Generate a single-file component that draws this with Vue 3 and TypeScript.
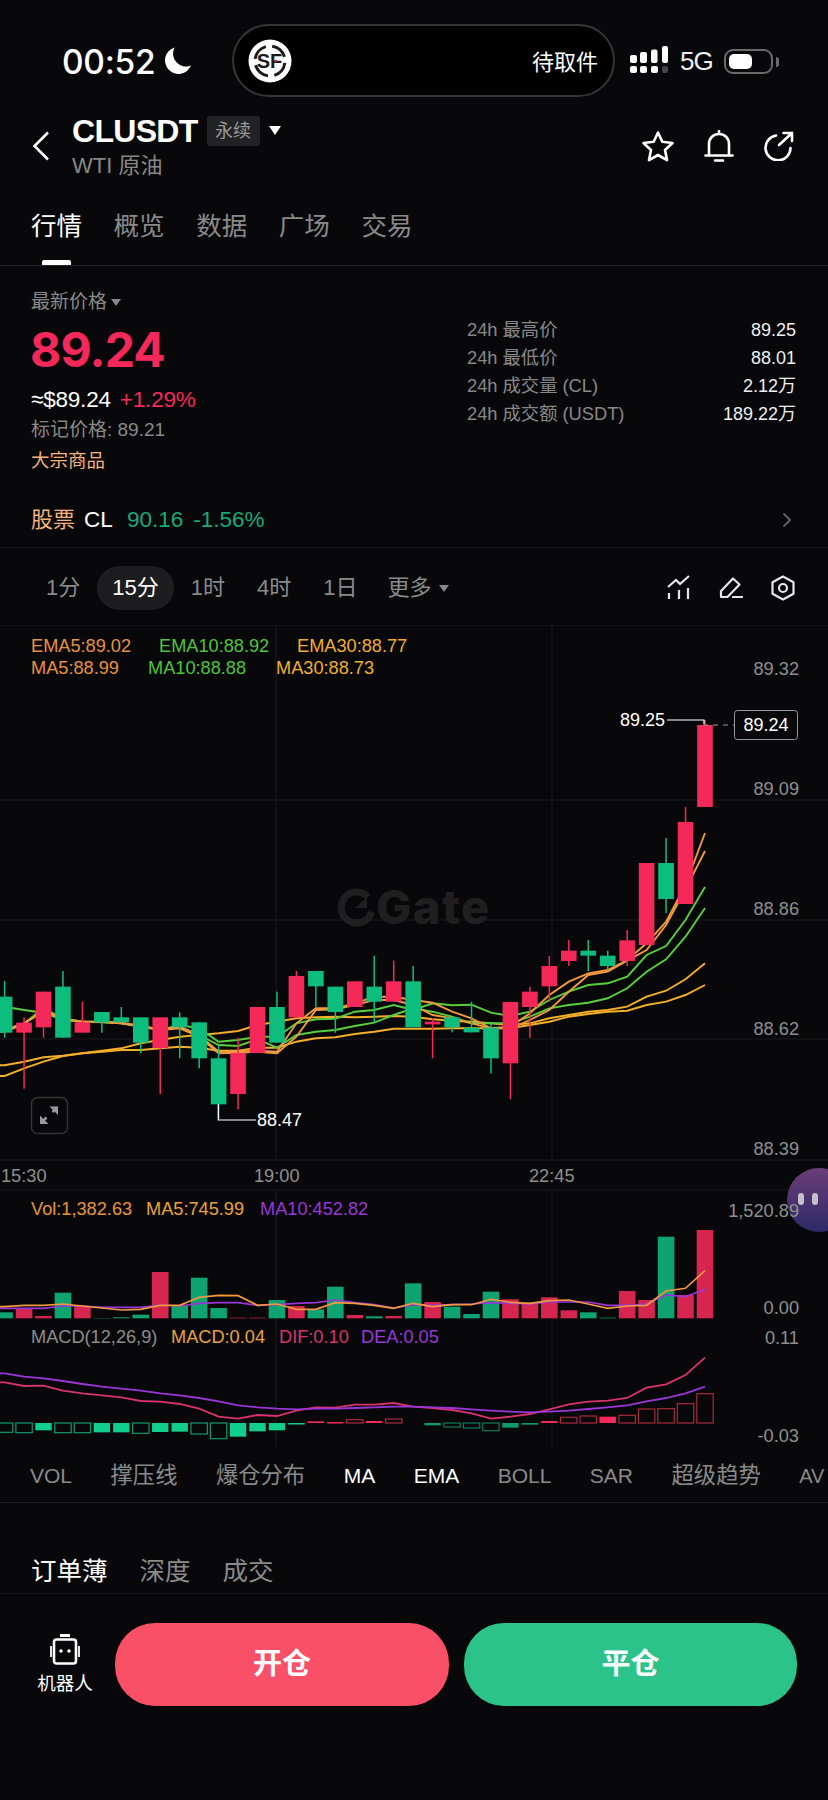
<script setup lang="ts">
type Candle = [number, number, number, number, 'r' | 'g']
const xOf = (i: number) => 4.6 + i * 19.455
const mainY = (z: number) => 920 + z / 3
const subY = (z: number) => 1180 + z / 3

// body top, body bottom, wick top, wick bottom
const rawCandles: Candle[] = [
  [230,338,183,353,'g'],[308,338,292,506,'r'],[215,322,215,353,'r'],[200,353,153,353,'g'],
  [307,338,245,338,'r'],[276,307,276,338,'g'],[292,307,261,307,'g'],[292,368,292,399,'g'],
  [292,384,292,522,'r'],[292,322,277,415,'g'],[307,415,307,445,'g'],[415,553,375,600,'g'],
  [399,522,353,568,'r'],[261,399,261,399,'r'],[261,368,215,368,'g'],[168,292,153,292,'r'],
  [153,199,153,261,'g'],[200,276,200,338,'g'],[184,261,184,261,'r'],[200,245,107,307,'g'],
  [184,245,122,245,'r'],[184,322,138,322,'g'],[305,313,295,415,'r'],[292,322,292,337,'g'],
  [323,337,245,337,'g'],[323,415,310,460,'g'],[246,430,246,538,'r'],[215,261,200,353,'r'],
  [138,199,108,245,'r'],[92,123,60,138,'r'],[92,107,60,153,'g'],[107,138,92,150,'g'],
  [61,123,30,138,'r'],[-171,75,-171,75,'r'],[-171,-63,-246,-21,'g'],[-294,-48,-339,-48,'r'],
  [-585,-339,-600,-339,'r'],
]
const candles = rawCandles.map((c, i) => ({
  x: xOf(i), top: mainY(c[0]), h: (c[1] - c[0]) / 3, wt: mainY(c[2]), wb: mainY(c[3]),
  color: c[4] === 'r' ? '#f5285a' : '#0dbd7d',
}))

const pts = (ys: number[], f: (z: number) => number) =>
  `0,${f(ys[0]).toFixed(1)} ` + ys.map((y, i) => `${xOf(i).toFixed(1)},${f(y).toFixed(1)}`).join(' ')

const mainLines = [
  { c: '#f5ae2a', y: [436,425,412,407,400,392,385,370,360,350,345,340,333,315,305,295,292,290,292,290,288,290,298,302,305,310,315,310,295,285,275,270,260,230,212,178,130] },
  { c: '#f5ae2a', y: [468,445,425,408,400,395,390,390,385,380,383,392,392,383,383,365,355,352,342,335,326,326,326,325,325,325,325,315,305,290,282,275,272,255,245,225,195] },
  { c: '#58cf3c', y: [260,270,278,300,305,305,310,320,330,315,325,365,360,350,350,310,298,296,275,270,255,270,250,256,254,278,288,275,240,215,195,190,170,105,78,0,-99] },
  { c: '#58cf3c', y: [330,310,265,295,305,307,310,318,330,320,345,375,378,358,383,345,335,330,318,308,285,265,275,290,310,310,310,290,265,255,248,235,205,155,118,50,-36] },
  { c: '#f0993f', y: [330,310,275,296,305,305,308,318,328,320,345,395,395,392,395,310,265,265,250,230,230,240,248,275,295,325,320,280,225,185,160,150,120,70,5,-105,-261] },
  { c: '#f0993f', y: [335,312,270,298,305,306,310,318,330,325,350,400,398,395,400,350,270,268,255,240,240,255,285,295,310,325,325,300,270,215,165,155,122,90,15,-92,-207] },
].map(l => ({ c: l.c, d: pts(l.y, mainY) }))

const volTops = [397,385,408,338,378,414,412,404,276,376,293,384,413,413,360,378,388,320,405,409,408,310,366,380,402,335,358,368,352,391,397,413,333,360,170,345,150]
const volRed = [1,2,4,8,12,13,15,18,20,22,26,27,28,29,32,33,35,36]
const volBars = volTops.map((t, i) => ({
  x: xOf(i) - 8.3, y: subY(t), h: (415 - t) / 3,
  c: volRed.includes(i) ? '#d6264f' : '#0ea370',
}))

const volLines = [
  { c: '#9a36d8', y: [385,385,385,378,378,382,382,382,375,378,370,368,368,376,374,370,368,360,368,374,384,374,376,374,372,368,370,372,366,366,366,376,376,372,345,350,328] },
  { c: '#f0993f', y: [380,376,376,372,378,384,390,388,376,376,352,346,347,376,372,388,388,368,370,376,385,370,380,374,374,358,367,370,362,360,372,385,378,376,333,325,272] },
].map(l => ({ c: l.c, d: pts(l.y, subY) }))

const macdLines = [
  { c: '#d8336f', y: [607,618,617,632,640,646,652,663,665,672,686,710,716,705,708,692,682,683,674,674,669,680,684,690,700,716,710,702,688,673,665,662,654,623,613,585,533] },
  { c: '#9a36d8', y: [580,590,595,603,612,620,626,632,640,646,654,664,676,682,686,688,686,686,684,682,680,680,682,684,688,692,695,697,695,692,687,682,676,664,654,640,620] },
].map(l => ({ c: l.c, d: pts(l.y, subY) }))

// end value, hollow?, red?
const macdRaw: [number, boolean, boolean][] = [
  [757,true,false],[758,true,false],[751,false,false],[758,true,false],[758,true,false],[757,false,false],
  [757,false,false],[760,true,false],[756,false,false],[755,false,false],[762,true,false],[776,true,false],
  [770,false,false],[754,false,false],[751,false,false],[733,false,false],[724,false,true],[726,false,true],
  [719,true,true],[723,false,true],[717,true,true],[729,false,true],[736,false,false],[741,true,false],
  [744,true,false],[752,true,false],[743,false,false],[734,false,false],[723,false,true],[712,true,true],
  [708,true,true],[710,false,true],[706,true,true],[687,true,true],[686,true,true],[671,true,true],[641,true,true],
]
const macdBars = macdRaw.map((b, i) => {
  const top = Math.min(b[0], 729), bot = Math.max(b[0], 729)
  const h = (bot - top) / 3
  const dim = i >= 22 && i <= 27
  const color = b[2] ? (b[1] ? '#a82a40' : '#f5285a') : (b[1] ? (dim ? '#0f7a58' : '#119a6e') : (dim ? '#0f9a6c' : '#10cf8c'))
  return { x: xOf(i) - 8.2, y: subY(top), h, hollow: b[1], color }
}).filter(b => b.h > 0)

const grids = [625, 800, 920, 1039, 1160, 1190]
const axis = [
  { t: '89.32', y: 669 }, { t: '89.09', y: 789 }, { t: '88.86', y: 909 }, { t: '88.62', y: 1029 }, { t: '88.39', y: 1149 },
  { t: '1,520.89', y: 1211 }, { t: '0.00', y: 1308 }, { t: '0.11', y: 1338 }, { t: '-0.03', y: 1436 },
]
const labels = [
  { t: 'EMA5:89.02', x: 31, y: 646, c: '#e8913f' }, { t: 'EMA10:88.92', x: 159, y: 646, c: '#4fc43a' }, { t: 'EMA30:88.77', x: 297, y: 646, c: '#f0ae2e' },
  { t: 'MA5:88.99', x: 31, y: 668, c: '#e8913f' }, { t: 'MA10:88.88', x: 148, y: 668, c: '#4fc43a' }, { t: 'MA30:88.73', x: 276, y: 668, c: '#f0ae2e' },
  { t: 'Vol:1,382.63', x: 31, y: 1209, c: '#e8943a' }, { t: 'MA5:745.99', x: 146, y: 1209, c: '#e8a33a' }, { t: 'MA10:452.82', x: 260, y: 1209, c: '#9a36d8' },
  { t: 'MACD(12,26,9)', x: 31, y: 1337, c: '#8c8c8c' }, { t: 'MACD:0.04', x: 171, y: 1337, c: '#e8a33a' }, { t: 'DIF:0.10', x: 279, y: 1337, c: '#d8336f' }, { t: 'DEA:0.05', x: 361, y: 1337, c: '#9a36d8' },
]
const times = [{ t: '15:30', x: 1 }, { t: '19:00', x: 254 }, { t: '22:45', x: 529 }]

const navTabs = ['行情', '概览', '数据', '广场', '交易']
const stats = [
  { k: '24h 最高价', v: '89.25' }, { k: '24h 最低价', v: '88.01' },
  { k: '24h 成交量 (CL)', v: '2.12万' }, { k: '24h 成交额 (USDT)', v: '189.22万' },
]
const frames = ['1分', '15分', '1时', '4时', '1日']
const indicators = [
  { t: 'VOL', on: false, latin: true }, { t: '撑压线', on: false, latin: false }, { t: '爆仓分布', on: false, latin: false },
  { t: 'MA', on: true, latin: true }, { t: 'EMA', on: true, latin: true }, { t: 'BOLL', on: false, latin: true },
  { t: 'SAR', on: false, latin: true }, { t: '超级趋势', on: false, latin: false }, { t: 'AV', on: false, latin: true },
]
</script>

<template>
  <div class="page">
    <div class="status">
      <span class="time">00:52</span>
      <svg class="moon" width="28" height="30" viewBox="0 0 28 30"><path d="M10.5 1.5A13.5 13.5 0 1 0 27 19.5 13 13 0 0 1 10.5 1.5Z" fill="#fff" /></svg>
      <div class="island">
        <svg class="sf" width="44" height="44" viewBox="0 0 44 44">
          <circle cx="22" cy="22" r="21.5" fill="#fff" />
          <circle cx="22" cy="22" r="15" fill="none" stroke="#1a1a1a" stroke-width="3" stroke-dasharray="17 6.5" stroke-dashoffset="-2" />
          <text x="21.5" y="29" text-anchor="middle" class="sf-t">SF</text>
          <circle cx="28" cy="22" r="1.3" fill="#e0154a" />
        </svg>
        <span class="pickup">待取件</span>
      </div>
      <svg class="signal" width="40" height="28" viewBox="0 0 40 28">
        <rect x="1" y="9" width="7" height="8" rx="2" fill="#fff" /><rect x="1" y="20" width="7" height="7" rx="2" fill="#fff" />
        <rect x="11" y="6" width="7" height="11" rx="2" fill="#fff" /><rect x="11" y="20" width="7" height="7" rx="2" fill="#fff" />
        <rect x="22" y="3.500" width="6.500" height="13.500" rx="2" fill="#fff" /><rect x="22" y="20" width="7" height="7" rx="2" fill="#fff" />
        <rect x="33" y="0" width="6" height="17" rx="2" fill="#fff" /><rect x="33" y="20" width="6" height="7" rx="2" fill="#444" />
      </svg>
      <span class="net">5G</span>
      <div class="battery"><i class="level"></i></div>
      <i class="nub"></i>
    </div>

    <header class="head">
      <svg class="back" width="18" height="30" viewBox="0 0 18 30"><path d="M16 1.500 2.500 15 16 28.500" fill="none" stroke="#fff" stroke-width="2.600" /></svg>
      <div class="title">
        <div class="title-row">
          <span class="sym">CLUSDT</span>
          <span class="perp">永续</span>
          <i class="tri big"></i>
        </div>
        <div class="sub">WTI 原油</div>
      </div>
      <div class="head-icons">
        <svg width="34" height="32" viewBox="0 0 34 32"><path d="M17 2.500l4.300 9.300 10.200 1.200-7.500 7 2 10.100L17 25l-9 5.100 2-10.100-7.500-7 10.200-1.200Z" fill="none" stroke="#fff" stroke-width="2.600" stroke-linejoin="round" /></svg>
        <svg width="30" height="32" viewBox="0 0 30 32"><path d="M5 25V14C5 8 9.500 4 15 4s10 4 10 10v11M1.500 25.500h27M15 1v3M11 30.500h8" fill="none" stroke="#fff" stroke-width="2.600" stroke-linecap="round" /></svg>
        <svg width="32" height="30" viewBox="0 0 32 30"><path d="M13 4.500A12.500 12.500 0 1 0 27.500 17" fill="none" stroke="#fff" stroke-width="2.600" stroke-linecap="round" /><path d="M16 14 29 2M20.500 2H29v8" fill="none" stroke="#fff" stroke-width="2.600" stroke-linecap="round" /></svg>
      </div>
    </header>

    <nav class="tabs">
      <span v-for="(t, i) in navTabs" :key="t" class="tab" :class="{ on: i === 0 }">{{ t }}</span>
    </nav>

    <section class="summary">
      <div class="left">
        <div class="latest">最新价格 <i class="tri small"></i></div>
        <div class="price">89.24</div>
        <div class="usd">≈$89.24 <span class="up">+1.29%</span></div>
        <div class="mark">标记价格: 89.21</div>
        <div class="cat">大宗商品</div>
      </div>
      <div class="right">
        <div v-for="s in stats" :key="s.k" class="stat"><span class="k">{{ s.k }}</span><span class="v">{{ s.v }}</span></div>
      </div>
    </section>

    <div class="stock">
      <span class="cat2">股票</span><span class="cl">CL</span><span class="dn">90.16</span><span class="dn">-1.56%</span>
      <svg class="more" width="10" height="16" viewBox="0 0 10 16"><path d="M1.500 1.500 8 8l-6.500 6.500" fill="none" stroke="#777" stroke-width="1.500" /></svg>
    </div>

    <div class="frames">
      <span v-for="f in frames" :key="f" class="frame" :class="{ on: f === '15分' }">{{ f }}</span>
      <span class="frame mored">更多<i class="tri tiny"></i></span>
      <div class="frame-icons">
        <svg width="24" height="26" viewBox="0 0 24 26"><path d="M1 12 9 5l4 4 9-8M2 18v6M12 15v9M21 13v11" fill="none" stroke="#e6e6e6" stroke-width="2.200" /></svg>
        <svg width="24" height="26" viewBox="0 0 24 26"><path d="M2 22v-6L14 3.500l6.500 6L8.500 22ZM13 22h11" fill="none" stroke="#e6e6e6" stroke-width="2.200" stroke-linejoin="round" /></svg>
        <svg width="24" height="26" viewBox="0 0 24 26"><path d="M12 1.500 22.500 7.200v11.600L12 24.500 1.500 18.800V7.200Z" fill="none" stroke="#e6e6e6" stroke-width="2.200" stroke-linejoin="round" /><circle cx="12" cy="13" r="4" fill="none" stroke="#e6e6e6" stroke-width="2.200" /></svg>
      </div>
    </div>

    <svg class="chart" width="828" height="825" viewBox="0 625 828 825">
      <line v-for="g in grids" :key="g" x1="0" x2="828" :y1="g" :y2="g" class="grid" />
      <line x1="276" x2="276" y1="625" y2="1160" class="grid" /><line x1="552" x2="552" y1="625" y2="1160" class="grid" />
      <line x1="276" x2="276" y1="1190" y2="1447" class="grid" /><line x1="552" x2="552" y1="1190" y2="1447" class="grid" />

      <g class="wm">
        <path d="M368 897a15.500 15.500 0 1 0 3.500 15" fill="none" stroke="#1f1f20" stroke-width="7" />
        <path d="M355 908h12v-11" fill="#1f1f20" />
        <text x="376" y="924" class="wm-t">Gate</text>
      </g>

      <polyline v-for="(l, i) in mainLines" :key="i" :points="l.d" fill="none" :stroke="l.c" stroke-width="1.900" />
      <g v-for="(c, i) in candles" :key="i">
        <rect :x="c.x - 0.75" :y="c.wt" width="1.500" :height="c.wb - c.wt" :fill="c.color" />
        <rect :x="c.x - 7.8" :y="c.top" width="15.600" :height="c.h" :fill="c.color" />
      </g>

      <path d="M667 720h37v4" fill="none" stroke="#fff" stroke-width="1.200" />
      <line x1="703" x2="734" y1="725" y2="725" stroke="#999" stroke-width="1.200" stroke-dasharray="5 5" />
      <text x="620" y="726" class="note">89.25</text>
      <rect x="734.500" y="710.500" width="63" height="29" rx="3" fill="#08080a" stroke="#999" />
      <text x="766" y="731" text-anchor="middle" class="note">89.24</text>
      <path d="M218.300 1104v16H256" fill="none" stroke="#fff" stroke-width="1.200" />
      <text x="257" y="1126" class="note">88.47</text>

      <rect x="31.500" y="1097.500" width="36" height="36" rx="6" fill="none" stroke="#333" stroke-width="1.500" />
      <path d="M46.500 1117.500l-4.500 4.500M52.500 1112l4.500-4.500" stroke="#999" stroke-width="2.500" />
      <path d="M40 1115.500v8.500h8.500ZM49.500 1106.500h8.500v8.500Z" fill="#999" />

      <defs>
        <linearGradient id="bub" x1="0" y1="0" x2="0" y2="1"><stop offset="0" stop-color="#6c3e78" /><stop offset="1" stop-color="#2c2968" /></linearGradient>
      </defs>
      <circle cx="819" cy="1200" r="32" fill="url(#bub)" />
      <rect x="798" y="1193" width="6" height="12" rx="3" fill="#c4c0cc" /><rect x="812" y="1193" width="6" height="12" rx="3" fill="#c4c0cc" />

      <text v-for="l in labels" :key="l.t + l.x" :x="l.x" :y="l.y + 6" class="lab" :fill="l.c">{{ l.t }}</text>
      <text v-for="a in axis" :key="a.t" x="799" :y="a.y + 6" class="lab" text-anchor="end" fill="#8f8f8f">{{ a.t }}</text>
      <text v-for="t in times" :key="t.t" :x="t.x" y="1182" class="lab" fill="#8f8f8f">{{ t.t }}</text>

      <rect v-for="(b, i) in volBars" :key="i" :x="b.x" :y="b.y" width="16.600" :height="b.h" :fill="b.c" />
      <polyline v-for="(l, i) in volLines" :key="i" :points="l.d" fill="none" :stroke="l.c" stroke-width="1.700" />

      <template v-for="(b, i) in macdBars" :key="i">
        <rect v-if="b.hollow" :x="b.x" :y="b.y" width="16.400" :height="b.h" fill="none" :stroke="b.color" stroke-width="1.200" />
        <rect v-else :x="b.x" :y="b.y" width="16.400" :height="Math.max(b.h, 1.500)" :fill="b.color" />
      </template>
      <polyline v-for="(l, i) in macdLines" :key="i" :points="l.d" fill="none" :stroke="l.c" stroke-width="1.800" />
    </svg>

    <div class="inds">
      <span v-for="d in indicators" :key="d.t" class="ind" :class="{ on: d.on, latin: d.latin }">{{ d.t }}</span>
    </div>

    <div class="book">
      <span class="btab on">订单薄</span><span class="btab">深度</span><span class="btab">成交</span>
    </div>

    <footer class="foot">
      <div class="bot">
        <svg width="32" height="31" viewBox="0 0 32 31">
          <path d="M11 1.500h10" stroke="#fff" stroke-width="3" />
          <rect x="5" y="5.500" width="22" height="24" rx="2.500" fill="none" stroke="#fff" stroke-width="2.600" />
          <path d="M2 12v11M30 12v11" stroke="#fff" stroke-width="1.800" />
          <circle cx="12" cy="17" r="1.800" fill="#fff" /><circle cx="20" cy="17" r="1.800" fill="#fff" />
        </svg>
        <span>机器人</span>
      </div>
      <div class="btn open">开仓</div>
      <div class="btn close">平仓</div>
    </footer>
  </div>
</template>

<style>
html, body { margin: 0; background: #08080a; }
</style>

<style scoped>
.page { width: 828px; height: 1800px; overflow: hidden; position: relative; background: #08080a; color: #fff; font-family: "Liberation Sans", "Noto Sans CJK SC", sans-serif; }
i { display: block; }
.status { height: 100px; box-sizing: border-box; padding: 24px 0 3px 62px; display: flex; align-items: center; }
.time { margin-top: 3px; font-family: Inter, sans-serif; font-weight: 500; font-size: 33.500px; width: 102px; letter-spacing: -0.3px; line-height: 40px; }
.moon { margin-top: 0; }
.island { margin-left: 40px; width: 383px; height: 73px; box-sizing: border-box; border: 2.500px solid #353535; border-radius: 37px; background: #000; display: flex; align-items: center; justify-content: space-between; padding: 0 15px 0 14px; }
.sf-t { font-family: "Liberation Sans", sans-serif; font-weight: 700; font-size: 20px; fill: #1a1a1a; }
.pickup { font-size: 22px; margin-top: -1px; }
.signal { margin-left: 14px; margin-top: -1px; }
.net { margin-left: 11px; margin-top: 2px; font-size: 26px; width: 32px; letter-spacing: -1px; color: #eee; }
.battery { margin-left: 12px; margin-top: 2px; width: 49px; height: 25px; box-sizing: border-box; border: 2.500px solid #6a6a6a; border-radius: 9px; padding: 2.500px; }
.level { width: 23px; height: 15px; background: #fff; border-radius: 5px; }
.nub { width: 3px; height: 10px; margin-left: 3px; margin-top: 2px; background: #6a6a6a; border-radius: 0 3px 3px 0; }

.head { height: 90px; box-sizing: border-box; padding: 11px 33px 9px 32px; display: flex; align-items: center; }
.back { margin-right: 22px; }
.title { flex: 1; }
.title-row { display: flex; align-items: center; height: 30px; }
.sym { font-size: 32px; font-weight: 700; line-height: 30px; letter-spacing: -0.700px; }
.perp { margin-left: 9px; width: 53px; height: 30px; line-height: 30px; text-align: center; font-size: 18px; color: #999; background: #222224; border-radius: 3px; }
.tri { width: 0; height: 0; border-style: solid; border-color: transparent; }
.tri.big { margin-left: 9px; border-width: 9px 6px 0; border-top-color: #fff; }
.sub { margin-top: 9px; font-size: 22px; line-height: 22px; color: #888; }
.head-icons { display: flex; align-items: center; gap: 29px; }

.tabs { height: 76px; box-sizing: border-box; padding: 18px 0 0 31px; display: flex; gap: 31.600px; border-bottom: 1px solid #232325; }
.tab { position: relative; height: 57px; font-size: 25.500px; line-height: 36px; color: #8a8a8a; }
.tab.on { color: #fff; }
.tab.on::after { content: ""; position: absolute; left: 11px; top: 52px; width: 29px; height: 5px; background: #fff; border-radius: 2px 2px 0 0; }

.summary { height: 226px; box-sizing: border-box; padding: 0 32px 0 31px; display: flex; justify-content: space-between; }
.latest { margin-top: 26px; height: 20px; font-size: 19px; line-height: 20px; color: #888; display: flex; align-items: center; gap: 4px; }
.tri.small { border-width: 7px 5.500px 0; border-top-color: #888; }
.price { margin: 10px 0 0 -1px; height: 56px; font-family: Inter, sans-serif; font-weight: 700; font-size: 48px; line-height: 56px; color: #f6285a; letter-spacing: -0.800px; }
.usd { margin-top: 9px; height: 26px; font-size: 22.500px; line-height: 26px; letter-spacing: -0.200px; }
.up { color: #f6285a; margin-left: 3px; }
.mark { margin-top: 6px; height: 22px; font-size: 19px; line-height: 22px; color: #888; }
.cat { margin-top: 9px; height: 22px; font-size: 18.500px; line-height: 22px; color: #f5b27a; }
.right { width: 329px; padding-top: 50px; }
.stat { height: 28px; line-height: 28px; font-size: 18px; display: flex; justify-content: space-between; }
.k { color: #888; font-size: 18.300px; }
.v { color: #eee; }

.stock { height: 56px; box-sizing: border-box; padding: 0 36px 0 31px; display: flex; align-items: baseline; line-height: 56px; font-size: 22.500px; border-bottom: 1px solid #17171a; }
.cat2 { color: #f5b27a; width: 53px; font-size: 22px; }
.cl { width: 43px; }
.dn { color: #17a87b; margin-right: 10px; }
.more { margin-left: auto; align-self: center; }

.frames { height: 77px; box-sizing: border-box; padding: 18px 33px 0 31px; display: flex; gap: 2px; align-items: flex-start; }
.frame { height: 44px; line-height: 44px; padding: 0 15px; font-size: 22px; color: #8a8a8a; border-radius: 22px; }
.frame.on { color: #fff; background: #1d1d1f; }
.mored { display: flex; align-items: center; gap: 7px; margin-left: -2px; }
.tri.tiny { border-width: 7px 5px 0; border-top-color: #888; }
.frame-icons { margin-left: auto; display: flex; gap: 28px; margin-top: 9px; }

.chart { display: block; }
.grid { stroke: #1b1b1d; stroke-width: 1; }
.wm-t { font-family: Inter, sans-serif; font-weight: 800; font-size: 47px; fill: #1f1f20; letter-spacing: 1.500px; }
.lab { font-size: 18.200px; font-family: "Liberation Sans", sans-serif; }
.note { font-size: 18px; font-family: "Liberation Sans", sans-serif; fill: #fff; }

.inds { height: 53px; box-sizing: border-box; padding-left: 30px; display: flex; gap: 38.500px; white-space: nowrap; border-bottom: 1px solid #1b1b1d; }
.ind { font-size: 22.300px; line-height: 52px; color: #8a8a8a; flex: none; }
.ind.latin { font-size: 21px; }
.ind.latin:last-child { font-size: 20px; }
.ind.on { color: #fff; }

.book { height: 91px; box-sizing: border-box; padding: 50px 0 0 31px; display: flex; gap: 32px; border-bottom: 1px solid #141416; }
.btab { font-size: 25.500px; line-height: 36px; color: #8a8a8a; }
.btab.on { color: #fff; }

.foot { padding: 29px 31px 0 37px; display: flex; align-items: flex-start; }
.bot { width: 56px; margin-right: 22px; display: flex; flex-direction: column; align-items: center; margin-top: 11px; gap: 7px; font-size: 18.500px; line-height: 24px; white-space: nowrap; }
.btn { height: 83px; line-height: 83px; border-radius: 40px; text-align: center; font-size: 29px; font-weight: 700; }
.open { width: 334px; margin-right: 15px; background: #f95068; }
.close { width: 333px; background: #2cc38a; }
</style>
